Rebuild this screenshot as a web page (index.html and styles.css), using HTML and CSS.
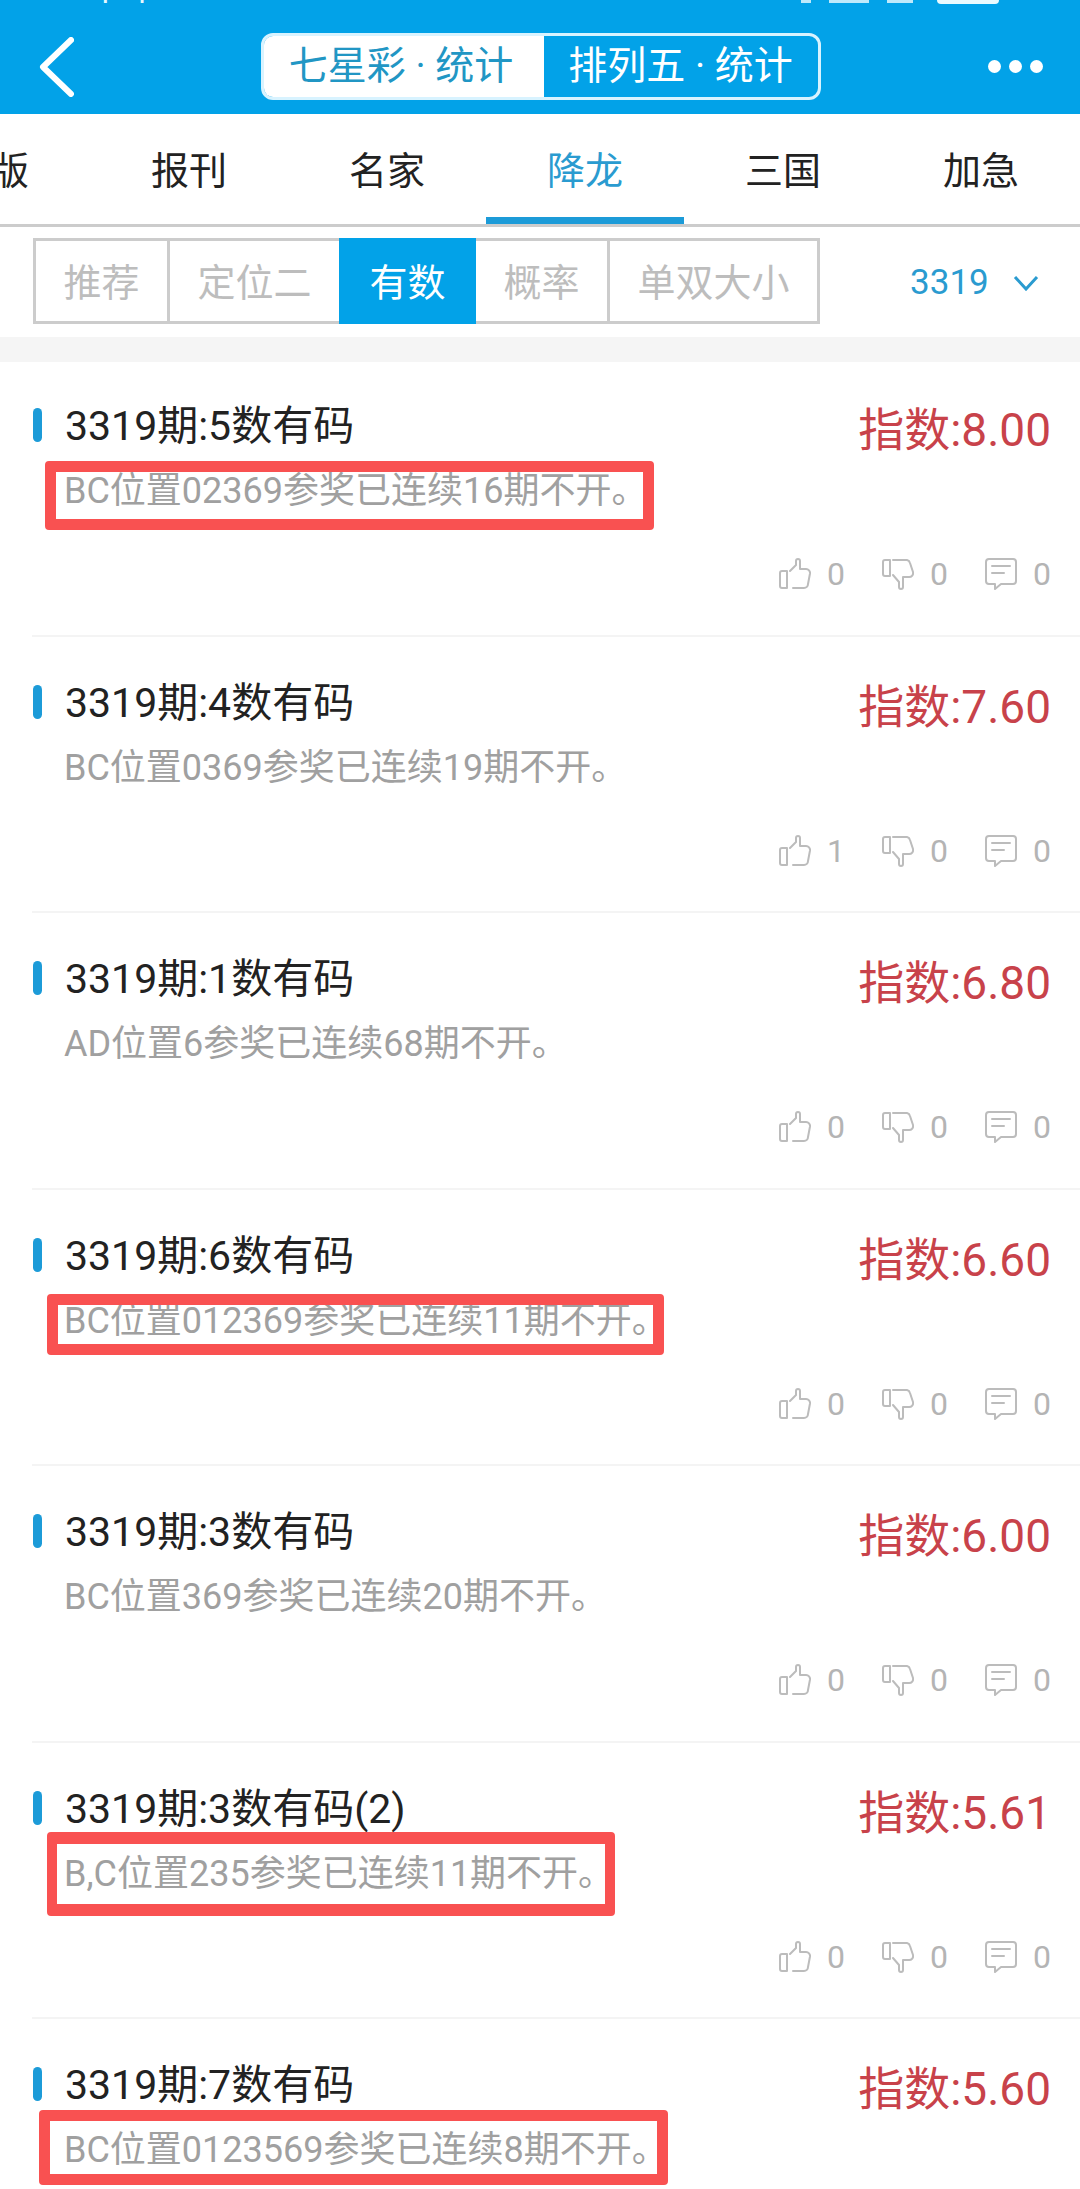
FILE: index.html
```html
<!DOCTYPE html>
<html lang="zh-CN">
<head>
  <meta charset="UTF-8">
  <meta name="viewport" content="width=device-width, initial-scale=1.0">
  <title>降龙 统计</title>
  <link rel="stylesheet" href="styles.css">
</head>
<body>
  <svg class="sprites" width="0" height="0">
    <symbol id="ico-up" viewBox="0 0 32 32">
      <path d="M8 13H3a2 2 0 0 0-2 2v13a2 2 0 0 0 2 2h5z"/>
      <path d="M11 13l6-6V3a2 2 0 0 1 4 0v8h6a4 4 0 0 1 4 4.5L29 26a4 4 0 0 1-4 4H14"/>
    </symbol>
    <symbol id="ico-down" viewBox="0 0 32 32">
      <path d="M8 2H3a2 2 0 0 0-2 2v12a2 2 0 0 0 2 2h5z"/>
      <path d="M11 2h14a4 4 0 0 1 3 3l3 9a4 4 0 0 1-4 5h-6v10a2 2 0 0 1-4 0v-5l-6-7"/>
    </symbol>
    <symbol id="ico-talk" viewBox="0 0 32 32">
      <path d="M4 1h24a3 3 0 0 1 3 3v19a3 3 0 0 1-3 3H16l-6 5v-5H4a3 3 0 0 1-3-3V4a3 3 0 0 1 3-3z"/>
      <path d="M7 8h18M7 15h12"/>
    </symbol>
  </svg>

  <header class="navbar">
    <div class="status">
      <span class="status-time">下午 7:33</span>
      <span class="status-icons">
        <i class="sig sig-a"></i><i class="sig sig-b"></i><i class="sig sig-c"></i><i class="battery"></i>
      </span>
    </div>
    <div class="nav-main">
      <svg class="back" viewBox="0 0 36 60"><path d="M33 3L5 30l28 27"/></svg>
      <div class="toggle">
        <span class="toggle-on">七星彩 · 统计</span>
        <span class="toggle-off">排列五 · 统计</span>
      </div>
      <div class="dots"><i></i><i></i><i></i></div>
    </div>
  </header>

  <nav class="tabs">
    <a>早版</a>
    <a>报刊</a>
    <a>名家</a>
    <a class="active">降龙</a>
    <a>三国</a>
    <a>加急</a>
  </nav>

  <div class="filters">
    <div class="segments">
      <span>推荐</span>
      <span>定位二</span>
      <span class="on">有数</span>
      <span>概率</span>
      <span>单双大小</span>
    </div>
    <div class="issue">3319
      <svg viewBox="0 0 26 16"><path d="M2 2l11 12L24 2"/></svg>
    </div>
  </div>

  <div class="gap"></div>

  <ul class="list">
    <li class="item">
      <div class="head"><h3>3319期:5数有码</h3><b>指数:8.00</b></div>
      <p class="desc">BC位置02369参奖已连续16期不开。</p>
      <div class="meta">
        <span><svg><use href="#ico-up"/></svg>0</span>
        <span><svg><use href="#ico-down"/></svg>0</span>
        <span><svg><use href="#ico-talk"/></svg>0</span>
      </div>
      <div class="mark mark-a"></div>
    </li>
    <li class="item">
      <div class="head"><h3>3319期:4数有码</h3><b>指数:7.60</b></div>
      <p class="desc">BC位置0369参奖已连续19期不开。</p>
      <div class="meta">
        <span><svg><use href="#ico-up"/></svg>1</span>
        <span><svg><use href="#ico-down"/></svg>0</span>
        <span><svg><use href="#ico-talk"/></svg>0</span>
      </div>
    </li>
    <li class="item">
      <div class="head"><h3>3319期:1数有码</h3><b>指数:6.80</b></div>
      <p class="desc">AD位置6参奖已连续68期不开。</p>
      <div class="meta">
        <span><svg><use href="#ico-up"/></svg>0</span>
        <span><svg><use href="#ico-down"/></svg>0</span>
        <span><svg><use href="#ico-talk"/></svg>0</span>
      </div>
    </li>
    <li class="item">
      <div class="head"><h3>3319期:6数有码</h3><b>指数:6.60</b></div>
      <p class="desc">BC位置012369参奖已连续11期不开。</p>
      <div class="meta">
        <span><svg><use href="#ico-up"/></svg>0</span>
        <span><svg><use href="#ico-down"/></svg>0</span>
        <span><svg><use href="#ico-talk"/></svg>0</span>
      </div>
      <div class="mark mark-b"></div>
    </li>
    <li class="item">
      <div class="head"><h3>3319期:3数有码</h3><b>指数:6.00</b></div>
      <p class="desc">BC位置369参奖已连续20期不开。</p>
      <div class="meta">
        <span><svg><use href="#ico-up"/></svg>0</span>
        <span><svg><use href="#ico-down"/></svg>0</span>
        <span><svg><use href="#ico-talk"/></svg>0</span>
      </div>
    </li>
    <li class="item">
      <div class="head"><h3>3319期:3数有码(2)</h3><b>指数:5.61</b></div>
      <p class="desc">B,C位置235参奖已连续11期不开。</p>
      <div class="meta">
        <span><svg><use href="#ico-up"/></svg>0</span>
        <span><svg><use href="#ico-down"/></svg>0</span>
        <span><svg><use href="#ico-talk"/></svg>0</span>
      </div>
      <div class="mark mark-c"></div>
    </li>
    <li class="item">
      <div class="head"><h3>3319期:7数有码</h3><b>指数:5.60</b></div>
      <p class="desc">BC位置0123569参奖已连续8期不开。</p>
      <div class="mark mark-d"></div>
    </li>
  </ul>
</body>
</html>
```

FILE: styles.css
```css
* {
  box-sizing: border-box;
}
html, body {
  margin: 0;
  height: 2189px;
  overflow: hidden;
  background: #fff;
}
body {
  font-family: Roboto, "Noto Sans CJK SC", sans-serif;
  color: #222;
}
.sprites {
  position: absolute;
}

/* top bar */
.navbar {
  height: 114px;
  background: #02a2e8;
}
.status {
  height: 6px;
  overflow: hidden;
  display: flex;
  justify-content: space-between;
  padding: 0 81px 0 88px;
  color: #e8f8ff;
}
.status-time {
  font-size: 36px;
  line-height: 36px;
  margin-top: -30px;
}
.status-icons {
  display: flex;
  align-items: flex-start;
  gap: 18px;
}
.status-icons i {
  display: block;
  height: 3px;
  background: #bfe9fb;
}
.sig-a { width: 10px; }
.sig-b { width: 40px; }
.sig-c { width: 26px; }
.status-icons .battery {
  width: 62px;
  height: 4px;
  margin-left: 6px;
  background: #eafaff;
  border-radius: 0 0 6px 6px;
}
.nav-main {
  display: grid;
  grid-template-columns: 1fr auto 1fr;
  align-items: center;
  padding: 27px 37px 0 38px;
}
.back {
  width: 36px;
  height: 60px;
  fill: none;
  stroke: #fff;
  stroke-width: 6;
  stroke-linecap: round;
  stroke-linejoin: round;
}
.toggle {
  display: flex;
  width: 560px;
  height: 67px;
  border: 3px solid #d8f3ff;
  border-radius: 12px;
  overflow: hidden;
  font-size: 39px;
  line-height: 61px;
  text-align: center;
}
.toggle span {
  white-space: nowrap;
}
.toggle-on {
  width: 280px;
  padding-right: 5px;
  background: #fff;
  color: #2196c4;
}
.toggle-off {
  flex: 1;
  color: #fff;
}
.dots {
  justify-self: end;
  display: flex;
  gap: 8px;
}
.dots i {
  display: block;
  width: 13px;
  height: 13px;
  border-radius: 50%;
  background: #fff;
}

/* channel tabs */
.tabs {
  display: flex;
  height: 113px;
  margin-left: -108px;
  width: 1188px;
  border-bottom: 3px solid #ccc;
}
.tabs a {
  width: 198px;
  height: 110px;
  font-size: 38px;
  line-height: 114px;
  text-align: center;
}
.tabs a.active {
  color: #2a9bd0;
  border-bottom: 7px solid #1c9bd8;
}

/* filter row */
.filters {
  display: flex;
  height: 110px;
  padding: 11px 0 0 33px;
}
.segments {
  display: flex;
  height: 86px;
}
.segments span {
  padding: 0 27.5px;
  margin-right: -3px;
  border: 3px solid #ccc;
  font-size: 38px;
  line-height: 84px;
  color: #bdbdbd;
}
.segments span.on {
  position: relative;
  background: #02a2e8;
  border-color: #02a2e8;
  color: #fff;
}
.issue {
  display: flex;
  align-items: center;
  gap: 24px;
  margin-left: 93px;
  padding-top: 3px;
  height: 86px;
  font-size: 35px;
  color: #2a9bd0;
}
.issue svg {
  width: 26px;
  height: 16px;
  fill: none;
  stroke: #2a9bd0;
  stroke-width: 3;
}
.gap {
  height: 25px;
  background: #f5f5f5;
}

/* list rows */
.list {
  list-style: none;
  margin: 0;
  padding: 0;
}
.item {
  position: relative;
  height: 276.5px;
  margin-left: 32px;
  padding: 40px 29px 0 0;
  border-bottom: 2px solid #f4f4f4;
}
.item:first-child {
  height: 274.5px;
  padding-top: 38px;
}
.head {
  display: flex;
  justify-content: space-between;
  align-items: flex-start;
  height: 50px;
}
.head h3 {
  margin: 0;
  padding-left: 33px;
  font-size: 41px;
  line-height: 52px;
  font-weight: 400;
  position: relative;
  white-space: nowrap;
}
.head h3::before {
  content: "";
  position: absolute;
  left: 1px;
  top: 8px;
  width: 9px;
  height: 34px;
  border-radius: 5px;
  background: #1c9bd8;
}
.head b {
  margin-top: 5px;
  font-size: 46px;
  line-height: 50px;
  font-weight: 400;
  color: #c8424a;
}
.desc {
  margin: 16px 0 0;
  padding-left: 32px;
  font-size: 36px;
  line-height: 50px;
  color: #a0a0a0;
  white-space: nowrap;
}
.meta {
  display: flex;
  justify-content: flex-end;
  gap: 37px;
  height: 40px;
  margin-top: 38px;
  font-size: 32px;
  line-height: 40px;
  color: #b4b4b4;
}
.meta span {
  display: flex;
  align-items: center;
  gap: 16px;
}
.meta svg {
  width: 32px;
  height: 32px;
  fill: none;
  stroke: #bcbcbc;
  stroke-width: 2;
  stroke-linecap: round;
  stroke-linejoin: round;
}

/* red hand-drawn frames laid over some descriptions */
.mark {
  position: absolute;
  border: 11px solid #f95151;
  border-radius: 4px;
}
.mark-a { left: 13px; top: 99px; width: 609px; height: 69px; }
.mark-b { left: 15px; top: 104.5px; width: 617px; height: 61px; }
.mark-c { left: 15px; top: 89.5px; width: 568px; height: 84px; border-width: 12px 10px; }
.mark-d { left: 7px; top: 91px; width: 629px; height: 75px; }
```
